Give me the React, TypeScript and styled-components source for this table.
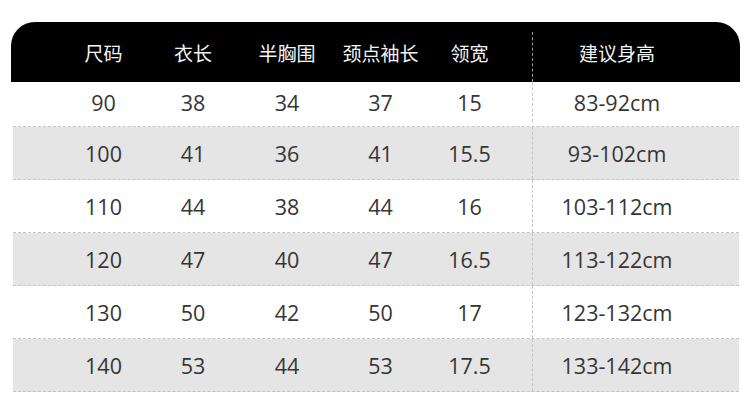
import styled, { createGlobalStyle } from "styled-components";

const GlobalStyle = createGlobalStyle`
  html, body {
    margin: 0;
    padding: 0;
    background: #ffffff;
  }
`;

const headers = ["尺码", "衣长", "半胸围", "颈点袖长", "领宽", "建议身高"];

const rows = [
  ["90", "38", "34", "37", "15", "83-92cm"],
  ["100", "41", "36", "41", "15.5", "93-102cm"],
  ["110", "44", "38", "44", "16", "103-112cm"],
  ["120", "47", "40", "47", "16.5", "113-122cm"],
  ["130", "50", "42", "50", "17", "123-132cm"],
  ["140", "53", "44", "53", "17.5", "133-142cm"],
];

// the neck column sits a bit left of its own box, away from the split line
const cellKind = (i: number, total: number) =>
  i === total - 1 ? "split" : i === total - 2 ? "narrow" : "plain";

export default function App() {
  return <>
    <GlobalStyle />
    <Page>
      <Table>
        <HeadRow>
          {headers.map((h, i) =>
            <HeadCell key={h} $kind={cellKind(i, headers.length)}>{h}</HeadCell>
          )}
        </HeadRow>
        {rows.map((r, ri) =>
          <BodyRow key={r[0]} $shaded={ri % 2 === 1} $first={ri === 0}>
            {r.map((v, i) =>
              <Cell key={i} $kind={cellKind(i, r.length)}>{v}</Cell>
            )}
          </BodyRow>
        )}
      </Table>
    </Page>
  </>;
}

type Kind = "plain" | "narrow" | "split";

const Page = styled.div`
  width: 752px;
  height: 401px;
  padding-top: 22px;
  box-sizing: border-box;
  overflow: hidden;
`

const Table = styled.div`
  margin-left: 11px;
  width: 729px;
  display: flex;
  flex-direction: column;
`

const columns = "87px 92px 96px 91px 107px 172px 1fr";

const HeadRow = styled.div`
  display: grid;
  grid-template-columns: ${columns};
  padding-left: 49px;
  height: 60px;
  background: #000000;
  border-top-left-radius: 24px;
  border-top-right-radius: 24px;
`

const HeadCell = styled.div<{ $kind: Kind }>`
  display: flex;
  align-items: center;
  justify-content: center;
  color: #f4f4f4;
  font-family: "Noto Sans CJK SC", "Noto Sans", sans-serif;
  font-size: 19px;
  margin-top: ${p => p.$kind === "split" ? "10px" : "0"};
  padding-bottom: ${p => p.$kind === "split" ? "10px" : "0"};
  padding-right: ${p => p.$kind === "narrow" ? "20px" : p.$kind === "split" ? "4px" : "0"};
  border-left: ${p => p.$kind === "split" ? "1px dashed #9a9a9a" : "none"};
  margin-left: ${p => p.$kind === "split" ? "-1px" : "0"};
`

const BodyRow = styled.div<{ $shaded?: boolean; $first?: boolean }>`
  display: grid;
  grid-template-columns: ${columns};
  margin: 0 1px 0 2px;
  padding-left: 47px;
  height: ${p => p.$first ? "45px" : "53px"};
  padding-bottom: ${p => p.$first ? "4px" : "0"};
  box-sizing: border-box;
  background: ${p => p.$shaded ? "#e5e5e5" : "#ffffff"};
  border-bottom: 1px dashed #c4c4c4;
`

const Cell = styled.div<{ $kind: Kind }>`
  display: flex;
  align-items: center;
  justify-content: center;
  color: #353535;
  font-family: "Open Sans", "Noto Sans", sans-serif;
  font-size: 21.5px;
  border-left: ${p => p.$kind === "split" ? "1px dashed #c4c4c4" : "none"};
  margin-left: ${p => p.$kind === "split" ? "-1px" : "0"};
  padding-right: ${p => p.$kind === "narrow" ? "20px" : p.$kind === "split" ? "4px" : "0"};
`
